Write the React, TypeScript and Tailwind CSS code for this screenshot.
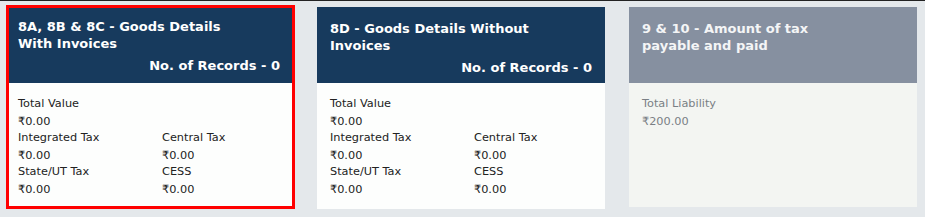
import React from "react"

type Field = { label: string; value: string }

const font = { fontFamily: '"DejaVu Sans", Verdana, sans-serif' }

function FieldCell({ f, muted }: { f: Field; muted?: boolean }) {
    return (
        <div className={muted ? "text-[#7a7f85]" : "text-[#222]"}>
            <div className="leading-[16px] mb-[2px]">{f.label}</div>
            <div className="leading-[16px]">{f.value}</div>
        </div>
    )
}

function TaxFields() {
    return (
        <div className="text-[11.3px]">
            <FieldCell f={{ label: "Total Value", value: "₹0.00" }} />
            <div className="grid grid-cols-[144px_1fr]">
                <FieldCell f={{ label: "Integrated Tax", value: "₹0.00" }} />
                <FieldCell f={{ label: "Central Tax", value: "₹0.00" }} />
                <FieldCell f={{ label: "State/UT Tax", value: "₹0.00" }} />
                <FieldCell f={{ label: "CESS", value: "₹0.00" }} />
            </div>
        </div>
    )
}

export default function App() {
    return (
        <div className="w-[925px] h-[217px] bg-[#e4e8eb] border-t border-[#222] overflow-hidden" style={font}>
            <div className="flex items-start pl-[6px] pt-[4px]">

                {/* Selected tile */}
                <div className="w-[289px] h-[204px] border-[3px] border-[#ff0000] flex flex-col">
                    <div className="h-[75px] bg-[#173a5d] text-white pl-[9px] pr-[12px] pt-[10px] font-bold text-[13px]">
                        <div className="leading-[17px] w-[215px]">8A, 8B &amp; 8C - Goods Details With Invoices</div>
                        <div className="leading-[17px] mt-[5px] text-right">No. of Records - 0</div>
                    </div>
                    <div className="flex-1 bg-[#fdfefd] pl-[9px] pt-[13px]">
                        <TaxFields />
                    </div>
                </div>

                <div className="ml-[22px] mt-[2px] w-[288px] h-[202px] flex flex-col">
                    <div className="h-[76px] bg-[#173a5d] text-white px-[13px] pt-[13px] font-bold text-[13px]">
                        <div className="leading-[17px] w-[215px]">8D - Goods Details Without Invoices</div>
                        <div className="leading-[17px] mt-[5px] text-right">No. of Records - 0</div>
                    </div>
                    <div className="flex-1 bg-[#fdfefd] pl-[13px] pt-[13px]">
                        <TaxFields />
                    </div>
                </div>

                {/* Disabled tile */}
                <div className="ml-[24px] mt-[2px] w-[288px] h-[200px] flex flex-col">
                    <div className="h-[76px] bg-[#8690a0] text-[#f4f5f6] px-[13px] pt-[13px] font-bold text-[13px]">
                        <div className="leading-[17px] w-[180px]">9 &amp; 10 - Amount of tax payable and paid</div>
                    </div>
                    <div className="flex-1 bg-[#f3f5f2] pl-[13px] pt-[13px] text-[11.3px]">
                        <FieldCell f={{ label: "Total Liability", value: "₹200.00" }} muted />
                    </div>
                </div>
            </div>
        </div>
    )
}
